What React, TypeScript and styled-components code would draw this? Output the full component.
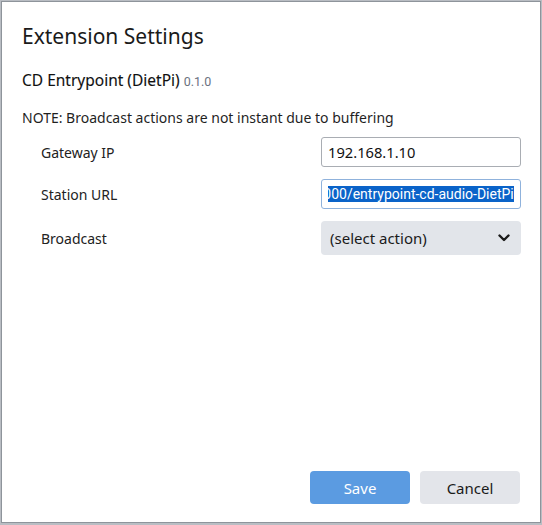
import React from 'react';
import styled, { createGlobalStyle } from 'styled-components';

const GlobalStyle = createGlobalStyle`
  html, body {
    margin: 0;
    padding: 0;
    background: #b9bdc3;
  }
  body {
    font-family: "Noto Sans", "Open Sans", sans-serif;
    color: #1f2328;
  }
`;

const Backdrop = styled.div`
  width: 542px;
  height: 525px;
  padding: 1px 1px 2px 1px;
  box-sizing: border-box;
`;

const Dialog = styled.div`
  height: 100%;
  box-sizing: border-box;
  background: #ffffff;
  border: 1px solid #8e949b;
  padding: 20px 20px 18px 20px;
  display: flex;
  flex-direction: column;
`;

const Title = styled.h1`
  margin: 0;
  font-size: 21px;
  font-weight: 400;
  line-height: 29px;
  color: #1a1a1a;
`;

const Heading = styled.h2`
  margin: 19px 0 0 0;
  font-size: 15.5px;
  font-weight: 400;
  line-height: 20px;
  color: #111;
  -webkit-text-stroke: 0.12px #111;
`;

const Version = styled.span`
  font-family: Roboto, "Liberation Sans", sans-serif;
  font-size: 12.5px;
  font-weight: 400;
  color: #6b7280;
  -webkit-text-stroke: 0;
`;

const Note = styled.p`
  margin: 16px 0 0 0;
  font-size: 14px;
  line-height: 19px;
  color: #1f1f1f;
`;

const Form = styled.div`
  margin-top: 10px;
  display: flex;
  flex-direction: column;
  gap: 12px;
`;

const Row = styled.label`
  display: grid;
  grid-template-columns: 280px 200px;
  align-items: center;
  padding-left: 19px;
`;

const Label = styled.span`
  font-size: 14px;
  color: #222;
`;

const Field = styled.input<{ $mono?: boolean }>`
  box-sizing: border-box;
  width: 200px;
  height: 30px;
  border: 1px solid ${p => (p.$mono ? '#8fb2dc' : '#a9adb3')};
  border-radius: 3px;
  padding: 0 6px;
  font-family: ${p =>
    p.$mono ? 'Roboto, "Liberation Sans", sans-serif' : '"Noto Sans", sans-serif'};
  font-size: ${p => (p.$mono ? '14px' : '14.7px')};
  color: #111;
  outline: none;
  background: #fff;
  &::selection {
    background: #0a63c9;
    color: #fff;
  }
`;

const SelectBox = styled.div`
  box-sizing: border-box;
  width: 200px;
  height: 34px;
  border-radius: 4px;
  background: #e2e5ea;
  display: flex;
  align-items: center;
  justify-content: space-between;
  padding: 0 11px 0 9px;
  font-size: 15px;
  color: #1a1a1a;
`;

const Spacer = styled.div`
  flex: 1;
`;

const Footer = styled.div`
  display: flex;
  justify-content: flex-end;
  gap: 10px;
`;

const Button = styled.button<{ $primary?: boolean }>`
  width: 100px;
  height: 33px;
  border: none;
  border-radius: 4px;
  font-family: "Noto Sans", sans-serif;
  font-size: 15px;
  background: ${p => (p.$primary ? '#5b9be1' : '#e3e5ea')};
  color: ${p => (p.$primary ? '#ffffff' : '#1a1a1a')};
  cursor: pointer;
`;

const Chevron = () => (
  <svg width="12" height="8" viewBox="0 0 12 8">
    <path d="M1.5 1.5 L6 6 L10.5 1.5" fill="none" stroke="#1a1a1a" strokeWidth="2.4" strokeLinecap="round" strokeLinejoin="round" />
  </svg>
);

export default function App() {
  const urlRef = React.useRef<HTMLInputElement>(null);

  React.useEffect(() => {
    const el = urlRef.current;
    if (el) {
      el.focus();
      el.setSelectionRange(0, el.value.length);
      el.scrollLeft = el.scrollWidth;
    }
  }, []);

  return (
    <Backdrop>
      <GlobalStyle />
      <Dialog>
        <Title>Extension Settings</Title>
        <Heading>
          CD Entrypoint (DietPi) <Version>0.1.0</Version>
        </Heading>
        <Note>NOTE: Broadcast actions are not instant due to buffering</Note>
        <Form>
          <Row>
            <Label>Gateway IP</Label>
            <Field defaultValue="192.168.1.10" />
          </Row>
          <Row>
            <Label>Station URL</Label>
            <Field $mono ref={urlRef} defaultValue="http://192.168.1.10:8000/entrypoint-cd-audio-DietPi" />
          </Row>
          <Row>
            <Label>Broadcast</Label>
            <SelectBox>
              <span>(select action)</span>
              <Chevron />
            </SelectBox>
          </Row>
        </Form>
        <Spacer />
        <Footer>
          <Button $primary>Save</Button>
          <Button>Cancel</Button>
        </Footer>
      </Dialog>
    </Backdrop>
  );
}
